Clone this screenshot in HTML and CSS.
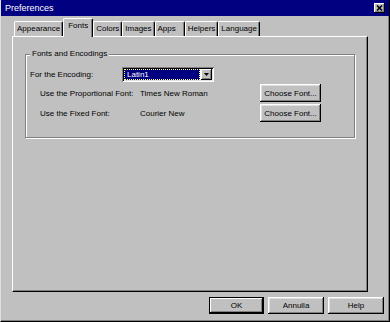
FILE: index.html
```html
<!DOCTYPE html>
<html>
<head>
<meta charset="utf-8">
<link rel="stylesheet" href="styles.css">
</head>
<body>
<div class="window">
  <div class="titlebar">
    <span class="title">Preferences</span>
    <button class="close" aria-label="Close">
      <svg width="7" height="6" viewBox="0 0 7 6"><path d="M1 0.5 L6 5.5 M6 0.5 L1 5.5" stroke="#000" stroke-width="1.6" fill="none"/></svg>
    </button>
  </div>
  <div class="main">
    <div class="tabs">
      <div class="tab">Appearance</div>
      <div class="tab active">Fonts</div>
      <div class="tab">Colors</div>
      <div class="tab">Images</div>
      <div class="tab tab-wide">Apps</div>
      <div class="tab">Helpers</div>
      <div class="tab">Language</div>
    </div>
    <div class="panel">
      <div class="group">
        <span class="legend">Fonts and Encodings</span>
        <div class="row-enc">
          <span class="enc-label">For the Encoding:</span>
          <div class="select">
            <span class="sel-value"><span class="sel-text">Latin1</span></span>
            <span class="sel-btn"><svg width="5" height="3" viewBox="0 0 5 3"><polygon points="0,0 5,0 2.5,3" fill="#000"/></svg></span>
          </div>
        </div>
        <div class="row-font">
          <span class="font-label">Use the Proportional Font:</span>
          <span class="font-value">Times New Roman</span>
          <button class="btn choose">Choose Font...</button>
        </div>
        <div class="row-font">
          <span class="font-label">Use the Fixed Font:</span>
          <span class="font-value">Courier New</span>
          <button class="btn choose">Choose Font...</button>
        </div>
      </div>
    </div>
  </div>
  <div class="footer">
    <button class="btn foot default">OK</button>
    <button class="btn foot">Annulla</button>
    <button class="btn foot">Help</button>
  </div>
</div>
</body>
</html>
```
FILE: styles.css
```css
* { box-sizing: border-box; }
body {
  margin: 0;
  background: #c0c0c0;
  font-family: "Liberation Sans", Arial, sans-serif;
  font-size: 8px;
  color: #000;
}
.window {
  width: 390px;
  height: 322px;
  background: #c0c0c0;
  border-left: 1px solid #dfdfdf;
  border-right: 1px solid #000;
  border-bottom: 1px solid #000;
  box-shadow: inset -1px -1px 0 #808080;
  display: flex;
  flex-direction: column;
}
.titlebar {
  flex: none;
  height: 16px;
  background: #000080;
  color: #fff;
  font-size: 9px;
  display: flex;
  align-items: center;
  justify-content: space-between;
  padding: 0 4px 0 4px;
}
.title { line-height: 10px; }
.close {
  width: 11px;
  height: 10px;
  padding: 0;
  border: none;
  background: #c0c0c0;
  box-shadow: inset -1px -1px 0 #000, inset 1px 1px 0 #fff, inset -2px -2px 0 #808080;
  display: flex;
  align-items: center;
  justify-content: center;
}
.close svg { display: block; }
.main {
  flex: none;
  padding: 2px 21px 0 11px;
}
.tabs {
  display: flex;
  align-items: flex-end;
  height: 18px;
  padding-left: 2px;
}
.tab {
  height: 15px;
  padding: 2px 2px 0 2px;
  border-top: 1px solid #fff;
  border-left: 1px solid #fff;
  border-right: 1px solid #000;
  box-shadow: inset -1px 0 0 #808080;
  border-radius: 2px 2px 0 0;
  line-height: 10px;
  white-space: nowrap;
}
.tab-wide { padding-right: 8px; }
.tab.active {
  height: 19px;
  margin-bottom: -1px;
  padding: 2px 4px 0 4px;
  position: relative;
  z-index: 1;
  background: #c0c0c0;
}
.panel {
  height: 256px;
  border-top: 1px solid #fff;
  border-left: 1px solid #fff;
  border-right: 1px solid #000;
  border-bottom: 1px solid #000;
  box-shadow: inset -1px -1px 0 #808080;
  padding: 17px 0 0 12px;
}
.group {
  position: relative;
  width: 330px;
  height: 84px;
  border: 1px solid #808080;
  box-shadow: 1px 1px 0 #fff, inset 1px 1px 0 #fff;
  padding: 12px 0 0 4px;
}
.legend {
  position: absolute;
  top: -6px;
  left: 4px;
  padding: 0 2px;
  background: #c0c0c0;
  line-height: 10px;
}
.row-enc {
  display: flex;
  align-items: center;
  height: 15px;
}
.enc-label { width: 92px; }
.select {
  width: 92px;
  height: 15px;
  display: flex;
  align-items: center;
  gap: 1px;
  background: #fff;
  padding: 2px;
  box-shadow: inset 1px 1px 0 #808080, inset -1px -1px 0 #fff, inset 2px 2px 0 #000, inset -2px -2px 0 #dfdfdf;
}
.sel-value {
  flex: 1;
  height: 11px;
  background: #000080;
  color: #fff;
  outline: 1px dotted #ffff80;
  outline-offset: -1px;
  padding-left: 3px;
  line-height: 11px;
}
.sel-btn {
  width: 11px;
  height: 11px;
  background: #c0c0c0;
  box-shadow: inset -1px -1px 0 #000, inset 1px 1px 0 #fff, inset -2px -2px 0 #808080;
  display: flex;
  align-items: center;
  justify-content: center;
}
.sel-btn svg { display: block; }
.row-font {
  display: flex;
  align-items: center;
  height: 18px;
  margin-top: 2px;
  padding-left: 10px;
}
.font-label { width: 100px; white-space: nowrap; }
.font-value { width: 120px; white-space: nowrap; }
.btn {
  font: inherit;
  color: #000;
  background: #c0c0c0;
  border: none;
  padding: 0;
  box-shadow: inset -1px -1px 0 #000, inset 1px 1px 0 #fff, inset -2px -2px 0 #808080, inset 2px 2px 0 #dfdfdf;
}
.choose {
  width: 61px;
  height: 18px;
}
.footer {
  flex: none;
  display: flex;
  justify-content: flex-end;
  gap: 4px;
  padding: 5px 5px 0 0;
}
.foot {
  width: 56px;
  height: 17px;
}
.foot.default {
  width: 55px;
  box-shadow: inset 0 0 0 1px #000, inset -2px -2px 0 #000, inset 2px 2px 0 #fff, inset -3px -3px 0 #808080;
}
```
